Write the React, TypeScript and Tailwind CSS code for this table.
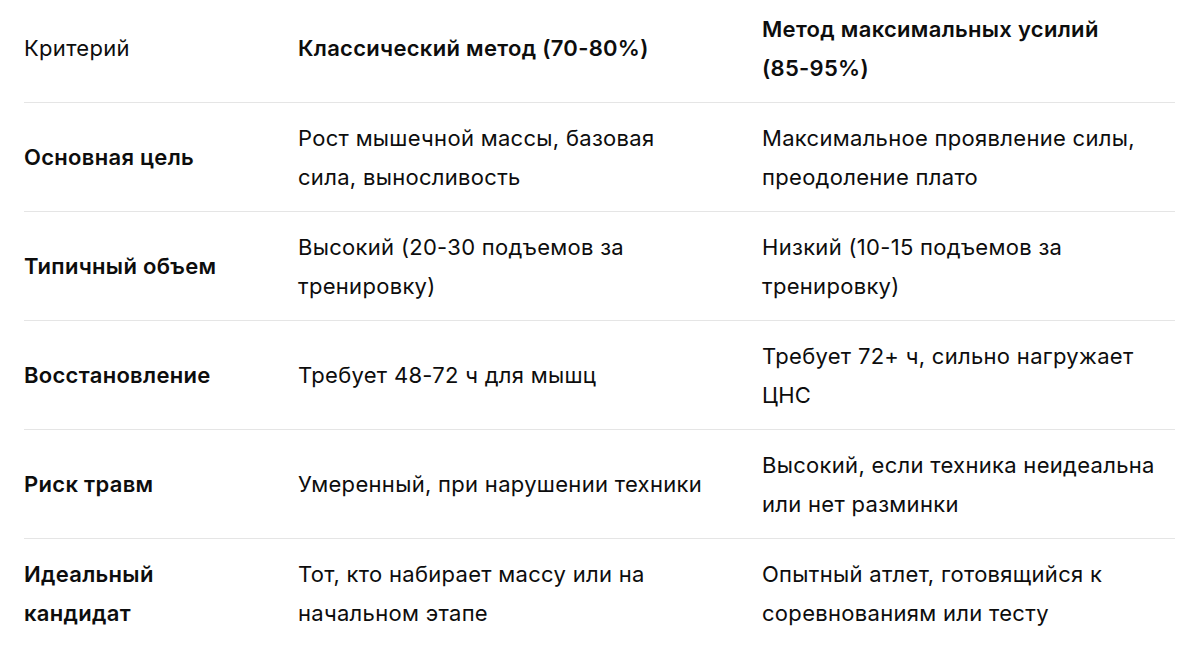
const rows: { label: string; classic: string[]; max: string[] }[] = [
  {
    label: "Основная цель",
    classic: ["Рост мышечной массы, базовая", "сила, выносливость"],
    max: ["Максимальное проявление силы,", "преодоление плато"],
  },
  {
    label: "Типичный объем",
    classic: ["Высокий (20-30 подъемов за", "тренировку)"],
    max: ["Низкий (10-15 подъемов за", "тренировку)"],
  },
  {
    label: "Восстановление",
    classic: ["Требует 48-72 ч для мышц"],
    max: ["Требует 72+ ч, сильно нагружает", "ЦНС"],
  },
  {
    label: "Риск травм",
    classic: ["Умеренный, при нарушении техники"],
    max: ["Высокий, если техника неидеальна", "или нет разминки"],
  },
  {
    label: "Идеальный\nкандидат",
    classic: ["Тот, кто набирает массу или на", "начальном этапе"],
    max: ["Опытный атлет, готовящийся к", "соревнованиям или тесту"],
  },
];

function Lines({ lines }: { lines: string[] }) {
  return (
    <>
      {lines.map((l, i) => (
        <span key={i} className="block whitespace-nowrap">{l}</span>
      ))}
    </>
  );
}

export default function App() {
  return (
    <div className="min-h-[645px] bg-white pl-[24px] pr-[25px] font-['Inter','Noto_Sans',sans-serif] text-[22px] tracking-[0.3px] leading-[38.5px] text-[#0d0d0d]">
      {/* header */}
      <div className="grid grid-cols-[274px_464px_1fr] items-center border-b border-[#e5e5e5] pt-[10px] pb-[15px]">
        <div>Критерий</div>
        <div className="font-semibold">Классический метод (70-80%)</div>
        <div className="font-semibold">
          <Lines lines={["Метод максимальных усилий", "(85-95%)"]} />
        </div>
      </div>

      {rows.map((r, i) => (
        <div
          key={r.label}
          className={`grid grid-cols-[274px_464px_1fr] items-center pt-[16px] pb-[15px] ${i < rows.length - 1 ? "border-b border-[#e5e5e5]" : ""}`}
        >
          <div className="font-semibold">
            <Lines lines={r.label.split("\n")} />
          </div>
          <div>
            <Lines lines={r.classic} />
          </div>
          <div>
            <Lines lines={r.max} />
          </div>
        </div>
      ))}
    </div>
  );
}
